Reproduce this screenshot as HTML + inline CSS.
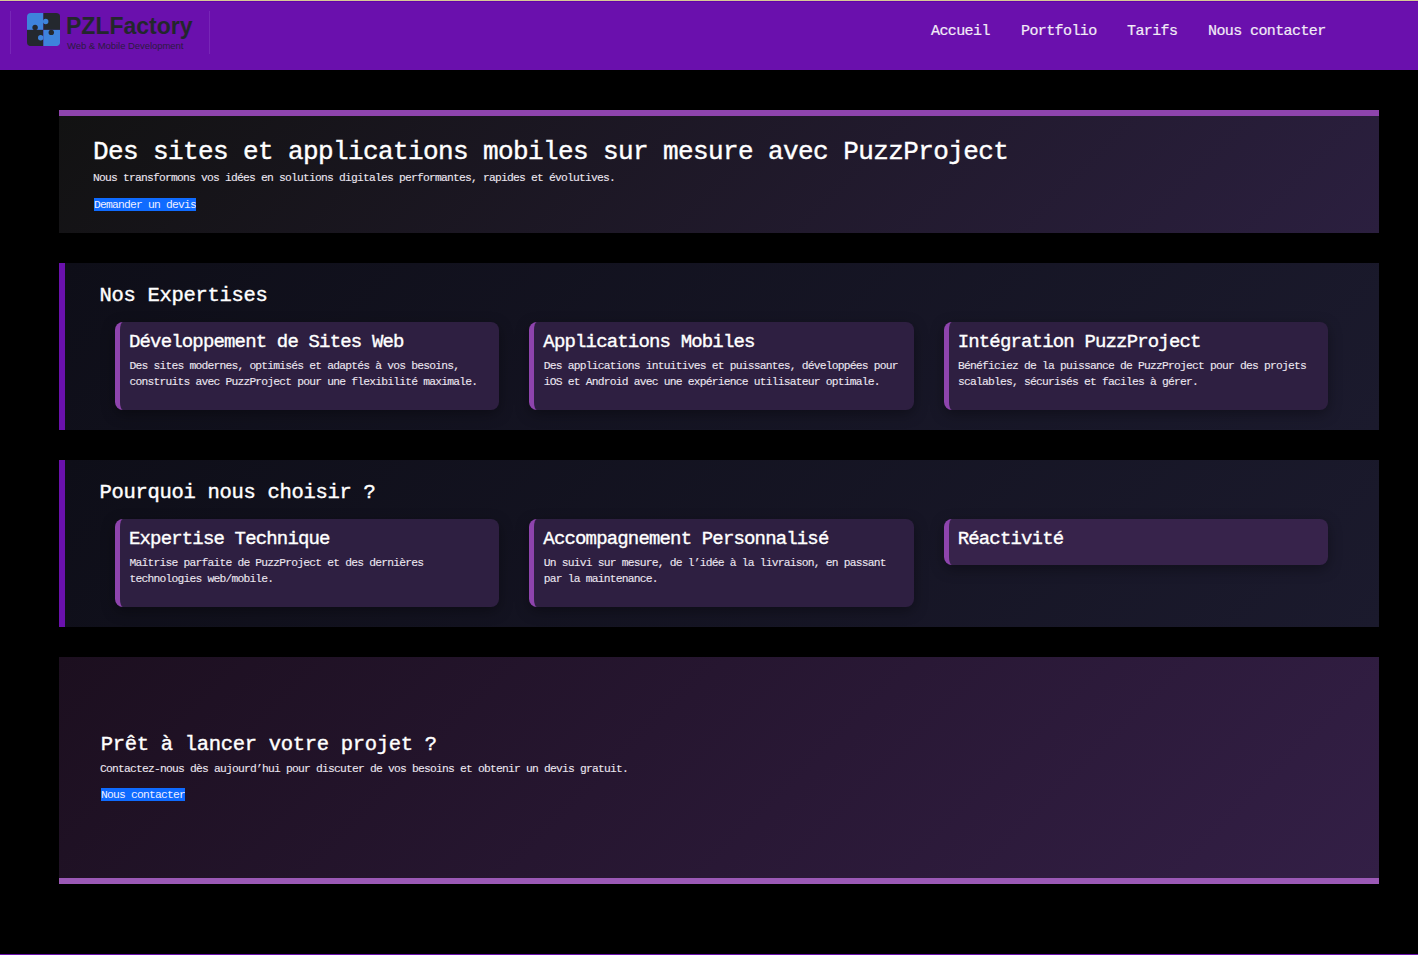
<!DOCTYPE html>
<html lang="fr">
<head>
<meta charset="utf-8">
<title>PZLFactory</title>
<style>
*{margin:0;padding:0;box-sizing:border-box}
html,body{width:1418px;height:955px;overflow:hidden;background:#000}
body{position:relative;font-family:"Liberation Mono",monospace;color:#fff}
.a{position:absolute;white-space:nowrap;line-height:1}
#topline{position:absolute;left:0;top:0;width:1418px;height:1px;background:#d6c996}
header{position:absolute;left:0;top:1px;width:1418px;height:69px;background:#6a10ad;border-top:1px solid #6203aa}
.vl{position:absolute;width:1px;background:rgba(150,90,210,.3)}
.logo-t{font-family:"Liberation Sans",sans-serif;font-weight:bold;color:#23272c}
.nav{font-size:15px;letter-spacing:-0.6px;color:#f2ecf7;-webkit-text-stroke:0.2px #f2ecf7}
.sec{position:absolute;left:59px;width:1320px}
#hero{top:110px;height:123px;background:linear-gradient(135deg,#121212 0%,#2b1f3f 100%);border-top:6px solid #8e44ad}
#s2{top:263px;height:167px;background:linear-gradient(135deg,#0e0e18 0%,#1b1a2d 100%);border-left:6px solid #6a11ad}
#s3{top:460px;height:167px;background:linear-gradient(135deg,#0e0e18 0%,#1b1a2d 100%);border-left:6px solid #6a11ad}
#cta{top:657px;height:227px;background:linear-gradient(135deg,#1c0f1f 0%,#331f46 100%);border-bottom:6px solid #9b59b6}
.h1{font-size:26px;letter-spacing:-0.6px;-webkit-text-stroke:0.4px #fff}
.h2{font-size:20.5px;letter-spacing:-0.3px;-webkit-text-stroke:0.4px #fff}
.h3{font-size:19px;letter-spacing:-0.84px;-webkit-text-stroke:0.35px #fff}
.sm{font-size:11.3px;letter-spacing:-0.78px;color:#ece6f0;-webkit-text-stroke:0.1px #ece6f0}
.btn{position:absolute;height:13px;background:#0f6bff;color:#eef;font-size:11.3px;letter-spacing:-0.78px;line-height:14px;white-space:nowrap;overflow:hidden}
.card{position:absolute;width:384.33px;border-radius:8px;background:#2e1f41;border-left:5px solid #8e44ad;box-shadow:0 4px 14px rgba(0,0,0,.35)}
#footline{position:absolute;left:0;top:954px;width:1418px;height:1px;background:#6a11ad}
</style>
</head>
<body>
<div id="topline"></div>
<header>
  <div class="vl" style="left:10px;top:9px;height:43px"></div>
  <div class="vl" style="left:209px;top:9px;height:43px"></div>
  <svg style="position:absolute;left:26.8px;top:10.7px" width="33.1" height="33.1" viewBox="0 0 33.1 33.1">
    <defs><clipPath id="rc"><rect x="0" y="0" width="33.1" height="33.1" rx="4"/></clipPath></defs>
    <g clip-path="url(#rc)">
      <rect x="0" y="0" width="16.4" height="16.9" fill="#3e83dc"/>
      <rect x="16.4" y="0" width="16.7" height="16.9" fill="#24282e"/>
      <rect x="0" y="16.9" width="16.4" height="16.2" fill="#24282e"/>
      <rect x="16.4" y="16.9" width="16.7" height="16.2" fill="#3e83dc"/>
      <circle cx="18.7" cy="8.5" r="2.7" fill="#3e83dc"/>
      <circle cx="8.1" cy="14.5" r="2.7" fill="#24282e"/>
      <circle cx="24.3" cy="19.4" r="2.7" fill="#24282e"/>
      <circle cx="13.7" cy="24.7" r="2.7" fill="#3e83dc"/>
    </g>
  </svg>
  <div class="a logo-t" style="left:66px;top:13px;font-size:23px;letter-spacing:0px">PZLFactory</div>
  <div class="a logo-t" style="left:67px;top:38.5px;font-size:9.5px;font-weight:normal;color:#2c1b40;letter-spacing:-0.05px">Web &amp; Mobile Development</div>
  <div class="a nav" style="left:931px;top:22.2px">Accueil</div>
  <div class="a nav" style="left:1021px;top:22.2px">Portfolio</div>
  <div class="a nav" style="left:1127px;top:22.2px">Tarifs</div>
  <div class="a nav" style="left:1208px;top:22.2px">Nous contacter</div>
</header>

<div class="sec" id="hero">
  <div class="a h1" style="left:34px;top:22.9px">Des sites et applications mobiles sur mesure avec PuzzProject</div>
  <div class="a sm" style="left:34px;top:57.1px">Nous transformons vos idées en solutions digitales performantes, rapides et évolutives.</div>
  <div class="btn" style="left:35px;top:82px;width:102px">Demander un devis</div>
</div>

<div class="sec" id="s2">
  <div class="a h2" style="left:34.4px;top:23px">Nos Expertises</div>
  <div class="card" style="left:50px;top:59px;height:88px">
    <div class="a h3" style="left:9px;top:11px">Développement de Sites Web</div>
    <div class="a sm" style="left:9.4px;top:35.8px;line-height:16px">Des sites modernes, optimisés et adaptés à vos besoins,<br>construits avec PuzzProject pour une flexibilité maximale.</div>
  </div>
  <div class="card" style="left:464.33px;top:59px;height:88px">
    <div class="a h3" style="left:9px;top:11px">Applications Mobiles</div>
    <div class="a sm" style="left:9.4px;top:35.8px;line-height:16px">Des applications intuitives et puissantes, développées pour<br>iOS et Android avec une expérience utilisateur optimale.</div>
  </div>
  <div class="card" style="left:878.67px;top:59px;height:88px">
    <div class="a h3" style="left:9px;top:11px">Intégration PuzzProject</div>
    <div class="a sm" style="left:9.4px;top:35.8px;line-height:16px">Bénéficiez de la puissance de PuzzProject pour des projets<br>scalables, sécurisés et faciles à gérer.</div>
  </div>
</div>

<div class="sec" id="s3">
  <div class="a h2" style="left:34.4px;top:23px">Pourquoi nous choisir ?</div>
  <div class="card" style="left:50px;top:59px;height:88px">
    <div class="a h3" style="left:9px;top:11px">Expertise Technique</div>
    <div class="a sm" style="left:9.4px;top:35.8px;line-height:16px">Maîtrise parfaite de PuzzProject et des dernières<br>technologies web/mobile.</div>
  </div>
  <div class="card" style="left:464.33px;top:59px;height:88px">
    <div class="a h3" style="left:9px;top:11px">Accompagnement Personnalisé</div>
    <div class="a sm" style="left:9.4px;top:35.8px;line-height:16px">Un suivi sur mesure, de l’idée à la livraison, en passant<br>par la maintenance.</div>
  </div>
  <div class="card" style="left:878.67px;top:59px;height:46px;background:#37234b">
    <div class="a h3" style="left:9px;top:11px">Réactivité</div>
  </div>
</div>

<div class="sec" id="cta">
  <div class="a h2" style="left:41.8px;top:78.4px">Prêt à lancer votre projet ?</div>
  <div class="a sm" style="left:41px;top:106.8px">Contactez-nous dès aujourd’hui pour discuter de vos besoins et obtenir un devis gratuit.</div>
  <div class="btn" style="left:42px;top:131px;width:84px">Nous contacter</div>
</div>

<div id="footline"></div>
</body>
</html>
